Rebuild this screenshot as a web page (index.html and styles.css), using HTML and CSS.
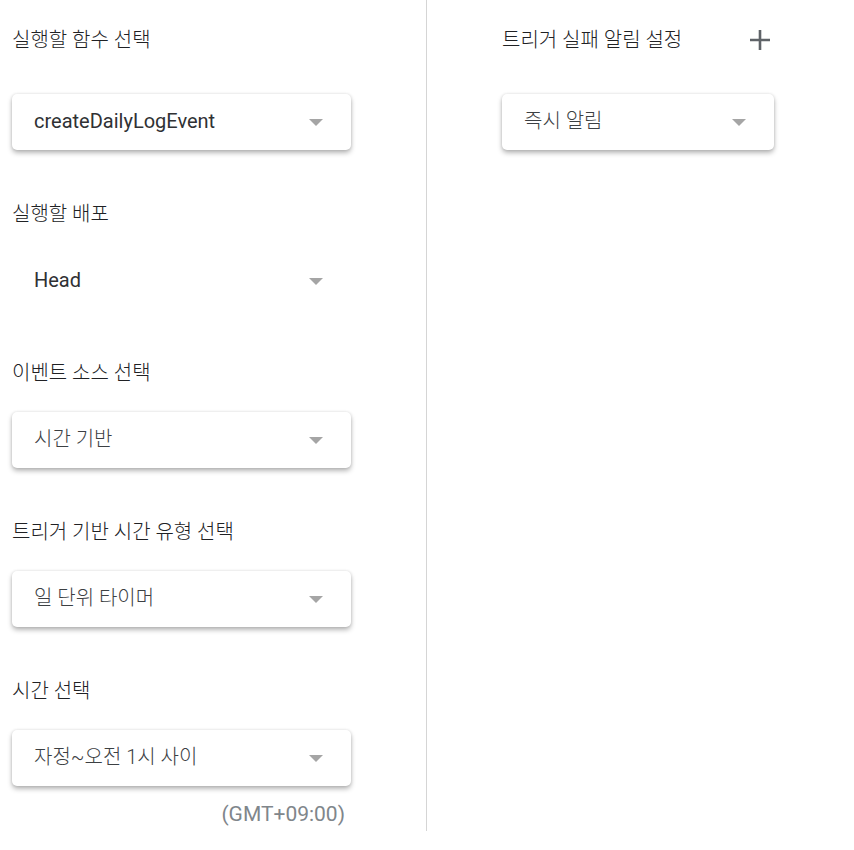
FILE: index.html
```html
<!DOCTYPE html>
<html lang="ko">
<head>
<meta charset="utf-8">
<title>트리거 설정</title>
<link rel="stylesheet" href="styles.css">
</head>
<body>
<div class="page">
  <div class="col col-left">
    <section class="field field-first">
      <h3 class="field-label">실행할 함수 선택</h3>
      <div class="select select-card">
        <span class="select-value">createDailyLogEvent</span>
        <span class="select-arrow"></span>
      </div>
    </section>
    <section class="field">
      <h3 class="field-label">실행할 배포</h3>
      <div class="select">
        <span class="select-value">Head</span>
        <span class="select-arrow"></span>
      </div>
    </section>
    <section class="field">
      <h3 class="field-label">이벤트 소스 선택</h3>
      <div class="select select-card">
        <span class="select-value select-value-ko">시간 기반</span>
        <span class="select-arrow"></span>
      </div>
    </section>
    <section class="field">
      <h3 class="field-label">트리거 기반 시간 유형 선택</h3>
      <div class="select select-card">
        <span class="select-value select-value-ko">일 단위 타이머</span>
        <span class="select-arrow"></span>
      </div>
    </section>
    <section class="field">
      <h3 class="field-label">시간 선택</h3>
      <div class="select select-card">
        <span class="select-value select-value-ko">자정~오전 1시 사이</span>
        <span class="select-arrow"></span>
      </div>
      <div class="tz">(GMT+09:00)</div>
    </section>
  </div>
  <div class="col col-right">
    <section class="field field-first">
      <div class="field-head">
        <h3 class="field-label">트리거 실패 알림 설정</h3>
        <svg class="plus" width="22" height="22" viewBox="0 0 22 22" aria-label="추가">
          <path d="M11 1v20M1 11h20" stroke="#5f6368" stroke-width="2.6" fill="none"/>
        </svg>
      </div>
      <div class="select select-card select-narrow">
        <span class="select-value select-value-ko">즉시 알림</span>
        <span class="select-arrow"></span>
      </div>
    </section>
  </div>
</div>
</body>
</html>
```

FILE: styles.css
```css
* { box-sizing: border-box; }

body {
  margin: 0;
  background: #ffffff;
  font-family: Roboto, "Noto Sans CJK KR", sans-serif;
  color: #202124;
}

.page {
  display: flex;
  align-items: flex-start;
}

.col-left {
  width: 427px;
  padding: 28px 0 5px 12px;
  border-right: 1px solid #d5d5d5;
}

.col-right {
  padding: 28px 0 0 75px;
}

.field + .field {
  margin-top: 52px;
}

.field-label {
  margin: 0;
  font-family: Roboto, "Noto Sans CJK KR", sans-serif;
  font-size: 20px;
  font-weight: 300;
  line-height: 24px;
  color: #202124;
  white-space: nowrap;
}

.field-head {
  display: flex;
  align-items: center;
  width: 272px;
  height: 24px;
}

.plus {
  margin-left: auto;
  margin-right: 3px;
  flex: none;
}

.select {
  display: flex;
  align-items: center;
  width: 339px;
  height: 56px;
  margin-top: 27px;
  padding: 0 28px 0 22px;
  border-radius: 5px;
  background: #ffffff;
}

.field-first .select {
  margin-top: 42px;
}

.select-card {
  box-shadow: 0 3px 5px rgba(0, 0, 0, 0.28), 0 0 3px rgba(0, 0, 0, 0.12);
}

.select-narrow {
  width: 272px;
}

.select-value {
  flex: 1;
  font-size: 20px;
  line-height: 24px;
  margin-top: -3px;
  color: #303134;
}

.select-value-ko {
  font-weight: 300;
  color: #3c4043;
}

.select-arrow {
  width: 0;
  height: 0;
  border-left: 7px solid transparent;
  border-right: 7px solid transparent;
  border-top: 7px solid #a5a5a5;
}

.tz {
  width: 333px;
  margin-top: 16px;
  text-align: right;
  font-size: 21px;
  line-height: 24px;
  color: #80868b;
}
```
